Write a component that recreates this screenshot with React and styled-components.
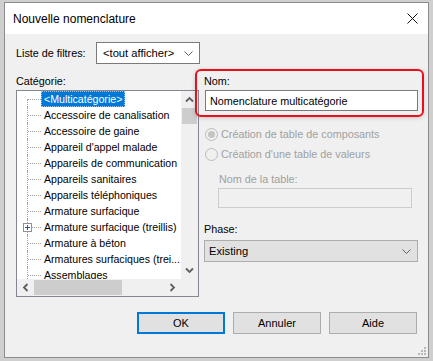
import React from 'react';
import styled, { createGlobalStyle } from 'styled-components';

const GlobalStyle = createGlobalStyle`
  html, body {
    margin: 0;
    background: #cfcfcf;
    font-family: "Liberation Sans", Arial, sans-serif;
  }
  * { box-sizing: border-box; }
`;

const Page = styled.div`
  height: 361px;
  padding: 2px 0 0 4px;
`;

const Window = styled.div`
  width: 425px;
  height: 356px;
  border: 1px solid #8c8c8c;
  background: #f0f0f0;
  display: flex;
  flex-direction: column;
`;

const TitleBar = styled.div`
  height: 31px;
  background: #fff;
  display: flex;
  align-items: center;
  justify-content: space-between;
  padding: 0 10px 0 8px;
  font-size: 12px;
  color: #000;
`;

const Body = styled.div`
  flex: 1;
  position: relative;
  padding: 8px 10px 0 11px;
  display: flex;
  flex-direction: column;
  font-size: 10.8px;
  color: #000;
`;

const FilterRow = styled.div`
  display: flex;
  align-items: center;
  height: 22px;
`;

const FilterLabel = styled.span`
  width: 80px;
`;

const Select = styled.div`
  display: flex;
  align-items: center;
  justify-content: space-between;
  width: ${(p) => p.$width || 'auto'};
  height: 22px;
  margin-top: ${(p) => p.$mt || 0}px;
  padding: 0 6px 0 ${(p) => p.$pl || 4}px;
  background: ${(p) => (p.$flat ? '#e1e1e1' : '#fff')};
  border: 1px solid ${(p) => (p.$flat ? '#adadad' : '#7a7a7a')};
  font-size: 11.2px;
`;

const MainGrid = styled.div`
  margin-top: 9px;
  display: grid;
  grid-template-columns: 183px 214px;
  column-gap: 5px;
  align-items: start;
`;

const Column = styled.div`
  display: flex;
  flex-direction: column;
`;

const Label = styled.div`
  line-height: ${(p) => p.$lh || 16}px;
  margin-top: ${(p) => p.$mt || 0}px;
  padding-left: ${(p) => p.$pl || 0}px;
  color: ${(p) => (p.$disabled ? '#a0a0a0' : '#000')};
`;

const Tree = styled.div`
  margin-top: 1px;
  height: 207px;
  border: 1px solid #828790;
  background: #fff;
  display: grid;
  grid-template-columns: 1fr 17px;
  grid-template-rows: 1fr 17px;
  overflow: hidden;
`;

const TreeItems = styled.div`
  overflow: hidden;
  font-size: 10.6px;
`;

const TreeRow = styled.div`
  display: flex;
  align-items: center;
  height: 16px;
  white-space: nowrap;
`;

const Gutter = styled.div`
  position: relative;
  flex: none;
  width: 24px;
  height: 100%;

  &::before {
    content: '';
    position: absolute;
    left: 10px;
    top: ${(p) => (p.$first ? '8px' : '0')};
    bottom: 0;
    border-left: 1px dotted #a0a0a0;
  }

  &::after {
    content: '';
    position: absolute;
    left: 11px;
    top: 8px;
    width: 13px;
    border-top: 1px dotted #a0a0a0;
  }
`;

const Expander = styled.span`
  position: absolute;
  z-index: 1;
  left: 6px;
  top: 4px;
  width: 9px;
  height: 9px;
  border: 1px solid #919191;
  background: #fff;
  display: flex;
  align-items: center;
  justify-content: center;
`;

const ItemText = styled.span`
  height: 16px;
  line-height: 16px;
  padding: 0 3px;
  background: ${(p) => (p.$selected ? '#0078d7' : 'transparent')};
  color: ${(p) => (p.$selected ? '#fff' : '#000')};
  outline: ${(p) => (p.$selected ? '1px dotted #9cc8ef' : 'none')};
  outline-offset: -1px;
`;

const VScroll = styled.div`
  background: #f0f0f0;
  display: flex;
  flex-direction: column;
`;

const HScroll = styled.div`
  background: #f0f0f0;
  display: flex;
`;

const ArrowBox = styled.div`
  flex: none;
  width: 17px;
  height: 17px;
  display: flex;
  align-items: center;
  justify-content: center;
`;

const Thumb = styled.div`
  flex: none;
  background: #cdcdcd;
  width: ${(p) => (p.$horizontal ? '88px' : 'auto')};
  height: ${(p) => (p.$horizontal ? 'auto' : '16px')};
  margin: ${(p) => (p.$horizontal ? '1px 0' : '0 1px')};
`;

const Track = styled.div`
  flex: 1;
`;

const Corner = styled.div`
  background: #f0f0f0;
`;

const NameGroup = styled.div`
  position: relative;
  margin-top: 1px;

  &::after {
    content: '';
    position: absolute;
    inset: -5px -6px -6px -9px;
    border: 2px solid #e8101c;
    border-radius: 6px;
    box-shadow: 0 1px 4px rgba(0, 0, 0, 0.18);
    pointer-events: none;
  }
`;

const TextInput = styled.div`
  height: ${(p) => p.$h || 21}px;
  margin-top: ${(p) => p.$mt || 1}px;
  margin-left: ${(p) => p.$ml || 1}px;
  width: ${(p) => p.$width || 'auto'};
  border: 1px solid ${(p) => (p.$disabled ? '#cccccc' : '#7a7a7a')};
  background: ${(p) => (p.$disabled ? '#f0f0f0' : '#fff')};
  padding-left: 4px;
  display: flex;
  align-items: center;
  font-size: 10.8px;
`;

const RadioRow = styled.div`
  display: flex;
  align-items: center;
  gap: 3px;
  height: 20px;
  margin-top: ${(p) => p.$mt || 0}px;
  padding-left: 1px;
  color: #a0a0a0;
  font-size: 10.8px;
`;

const RadioCircle = styled.span`
  width: 13px;
  height: 13px;
  border-radius: 50%;
  border: 1px solid #bcbcbc;
  background: #f0f0f0;
  display: flex;
  align-items: center;
  justify-content: center;

  &::after {
    content: '';
    display: ${(p) => (p.$checked ? 'block' : 'none')};
    width: 7px;
    height: 7px;
    border-radius: 50%;
    background: #c4c4c4;
  }
`;

const ButtonRow = styled.div`
  margin-top: 15px;
  margin-right: 1px;
  display: flex;
  justify-content: flex-end;
  gap: 8px;
`;

const Button = styled.div`
  width: 88px;
  height: 22px;
  display: flex;
  align-items: center;
  justify-content: center;
  background: #e1e1e1;
  border: ${(p) => (p.$default ? '2px solid #0078d7' : '1px solid #adadad')};
  font-size: 11px;
`;

const Grip = styled.svg`
  position: absolute;
  right: 1px;
  bottom: 1px;
`;

const Chevron = ({ color = '#606060' }) => (
  <svg width="9" height="5" viewBox="0 0 9 5">
    <polyline points="0.5,0.5 4.5,4.5 8.5,0.5" fill="none" stroke={color} strokeWidth="1" />
  </svg>
);

const ScrollArrow = ({ dir }) => {
  const rot = { up: 0, down: 180, left: 270, right: 90 }[dir];
  return (
    <svg width="9" height="9" viewBox="0 0 9 9" style={{ transform: `rotate(${rot}deg)` }}>
      <polyline points="1,6.5 4.5,3 8,6.5" fill="none" stroke="#606060" strokeWidth="1.8" />
    </svg>
  );
};

const categories = [
  '<Multicatégorie>',
  'Accessoire de canalisation',
  'Accessoire de gaine',
  "Appareil d'appel malade",
  'Appareils de communication',
  'Appareils sanitaires',
  'Appareils téléphoniques',
  'Armature surfacique',
  'Armature surfacique (treillis)',
  'Armature à béton',
  'Armatures surfaciques (trei...',
  'Assemblages',
];

export default function App() {
  return (
    <>
      <GlobalStyle />
      <Page>
        <Window>
          <TitleBar>
            <span>Nouvelle nomenclature</span>
            <svg width="11" height="11" viewBox="0 0 11 11">
              <path d="M0.5 0.5 L10.5 10.5 M10.5 0.5 L0.5 10.5" stroke="#111" strokeWidth="1" />
            </svg>
          </TitleBar>
          <Body>
            <FilterRow>
              <FilterLabel>Liste de filtres:</FilterLabel>
              <Select $width="104px" $pl={6}>
                <span>&lt;tout afficher&gt;</span>
                <Chevron />
              </Select>
            </FilterRow>

            <MainGrid>
              <Column>
                <Label>Catégorie:</Label>
                <Tree>
                  <TreeItems>
                    {categories.map((name, i) => (
                      <TreeRow key={name}>
                        <Gutter $first={i === 0}>
                          {i === 8 && (
                            <Expander>
                              <svg width="7" height="7" viewBox="0 0 7 7">
                                <path d="M1 3.5 H6 M3.5 1 V6" stroke="#2b5a9a" strokeWidth="1" />
                              </svg>
                            </Expander>
                          )}
                        </Gutter>
                        <ItemText $selected={i === 0}>{name}</ItemText>
                      </TreeRow>
                    ))}
                  </TreeItems>
                  <VScroll>
                    <ArrowBox><ScrollArrow dir="up" /></ArrowBox>
                    <Thumb />
                    <Track />
                    <ArrowBox><ScrollArrow dir="down" /></ArrowBox>
                  </VScroll>
                  <HScroll>
                    <ArrowBox><ScrollArrow dir="left" /></ArrowBox>
                    <Thumb $horizontal />
                    <Track />
                    <ArrowBox><ScrollArrow dir="right" /></ArrowBox>
                  </HScroll>
                  <Corner />
                </Tree>
              </Column>

              <Column>
                <NameGroup>
                  <Label $lh={15}>Nom:</Label>
                  <TextInput>Nomenclature multicatégorie</TextInput>
                </NameGroup>
                <RadioRow $mt={13}>
                  <RadioCircle $checked />
                  <span>Création de table de composants</span>
                </RadioRow>
                <RadioRow>
                  <RadioCircle />
                  <span>Création d'une table de valeurs</span>
                </RadioRow>
                <Label $mt={7} $pl={15} $disabled>Nom de la table:</Label>
                <TextInput $disabled $h={20} $ml={14} $width="194px" />
                <Label $mt={13}>Phase:</Label>
                <Select $flat $mt={3} $pl={4}>
                  <span>Existing</span>
                  <Chevron />
                </Select>
              </Column>
            </MainGrid>

            <ButtonRow>
              <Button $default>OK</Button>
              <Button>Annuler</Button>
              <Button>Aide</Button>
            </ButtonRow>

            <Grip width="9" height="9" viewBox="0 0 9 9">
              {[[6, 0], [3, 3], [6, 3], [0, 6], [3, 6], [6, 6]].map(([x, y]) => (
                <rect key={`${x}-${y}`} x={x} y={y} width="2" height="2" fill="#b8b8b8" />
              ))}
            </Grip>
          </Body>
        </Window>
      </Page>
    </>
  );
}
